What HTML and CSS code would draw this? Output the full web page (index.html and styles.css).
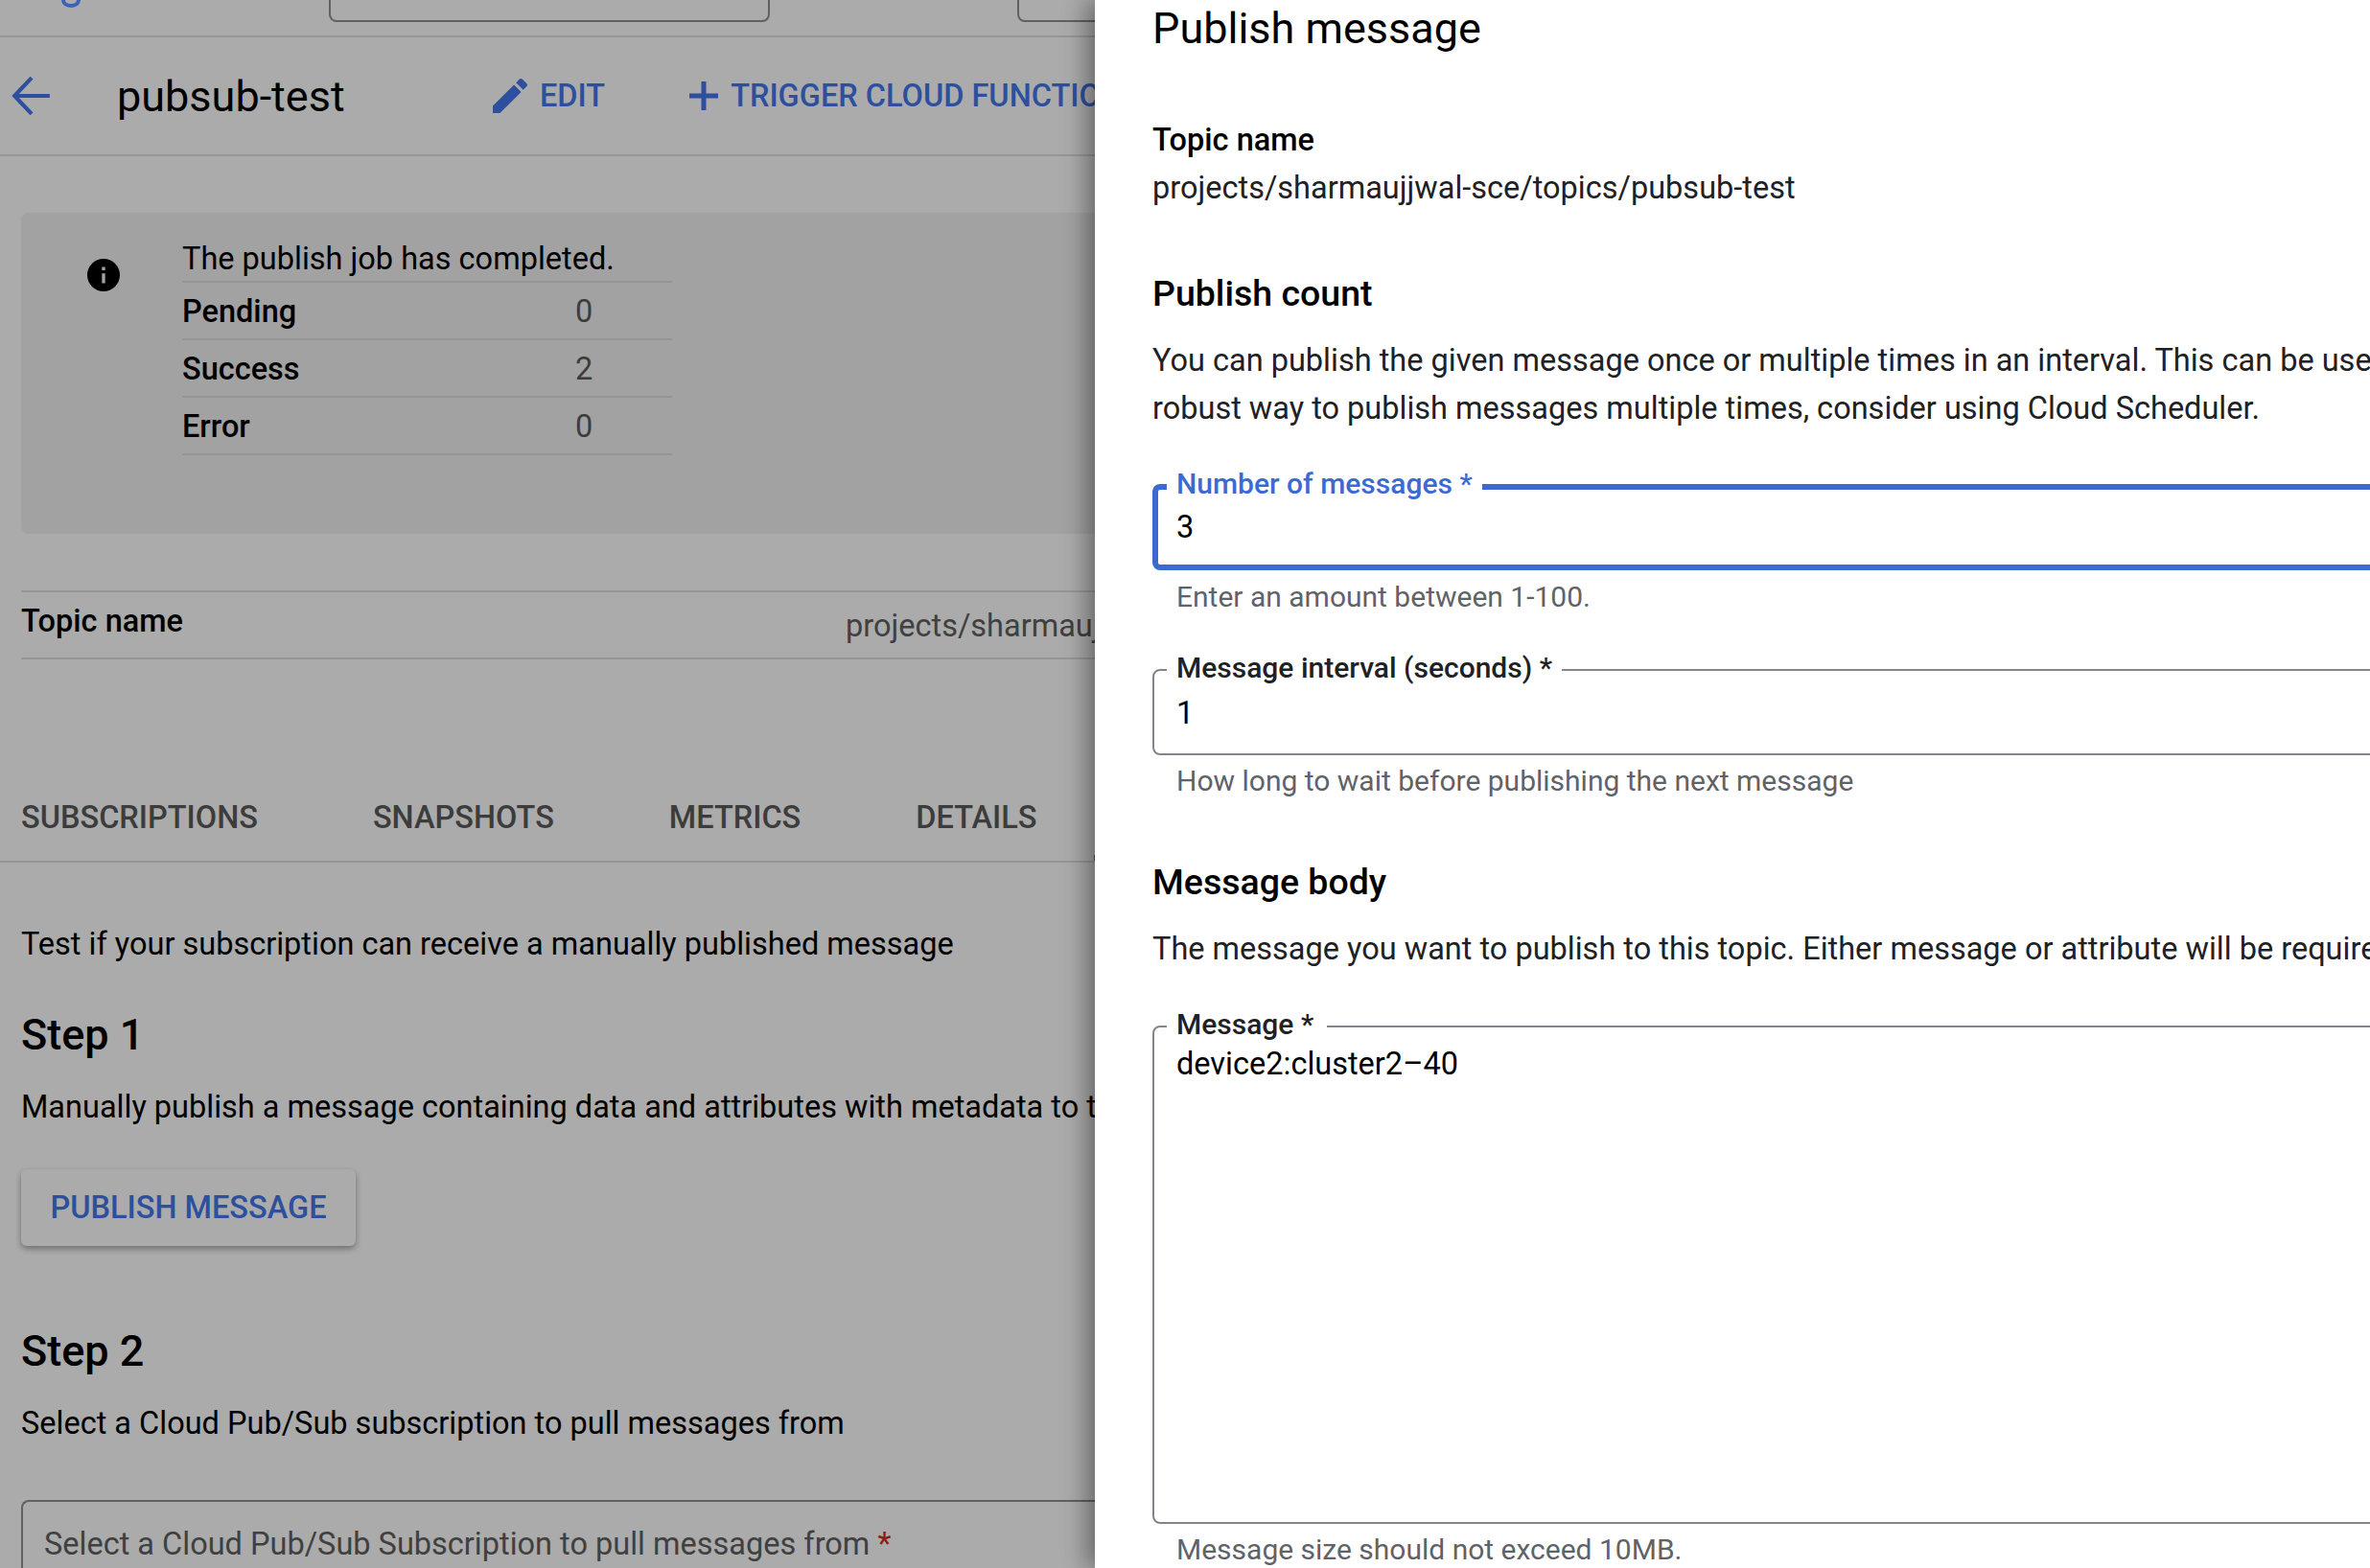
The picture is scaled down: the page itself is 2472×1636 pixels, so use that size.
FILE: index.html

```html
<!DOCTYPE html>
<html lang="en">
<head>
  <meta charset="UTF-8" />
  <meta name="viewport" content="width=device-width, initial-scale=1" />
  <title>Publish message - pubsub-test</title>
  <link rel="stylesheet" href="styles.css">
</head>
<body>
  <div class="page">
    <main class="topic">
      <div class="top-strip">
        <svg class="logo-tail" viewBox="0 0 20 8"><path d="M2 0c0 3.400 3 6 8 6s8-2.600 8-6" /></svg>
        <div class="top-box top-box-wide"></div>
        <div class="top-box"></div>
      </div>

      <div class="topic-head">
        <a class="back">
          <svg viewBox="0 0 40 40"><path d="M38 20H4M20 2 3 20l17 18" /></svg>
        </a>
        <h1>pubsub-test</h1>
        <a class="action action-edit">
          <svg viewBox="0 0 24 24"><path d="M3 17.250V21h3.750L17.810 9.940l-3.750-3.750L3 17.250zM20.710 7.040c.39-.39.39-1.020 0-1.410l-2.340-2.340c-.39-.39-1.020-.39-1.410 0l-1.830 1.830 3.750 3.750 1.830-1.830z" /></svg>
          EDIT
        </a>
        <a class="action action-trigger">
          <svg viewBox="0 0 30 30"><path d="M0 15h30M15 0v30" /></svg>
          TRIGGER CLOUD FUNCTION
        </a>
      </div>

      <div class="banner">
        <svg class="banner-icon" viewBox="0 0 20 20"><path d="M10 0a10 10 0 1 0 0 20 10 10 0 0 0 0-20zm1 15H9V9h2v6zm0-8H9V5h2v2z" /></svg>
        <div class="job">
          <div class="job-title">The publish job has completed.</div>
          <div class="job-row"><span class="job-label">Pending</span><span>0</span></div>
          <div class="job-row"><span class="job-label">Success</span><span>2</span></div>
          <div class="job-row"><span class="job-label">Error</span><span>0</span></div>
        </div>
      </div>

      <div class="meta">
        <span class="meta-label">Topic name</span>
        <span class="meta-value">projects/sharmaujjwal-sce/topics/pubsub-test</span>
      </div>

      <nav class="tabs">
        <a class="tab">SUBSCRIPTIONS</a>
        <a class="tab">SNAPSHOTS</a>
        <a class="tab">METRICS</a>
        <a class="tab">DETAILS</a>
        <a class="tab tab-active"></a>
      </nav>

      <section class="test">
        <p class="test-intro">Test if your subscription can receive a manually published message</p>
        <h2>Step 1</h2>
        <p class="step-text">Manually publish a message containing data and attributes with metadata to this topic</p>
        <button class="publish-btn" type="button">PUBLISH MESSAGE</button>
        <h2 class="step-two">Step 2</h2>
        <p class="step-text">Select a Cloud Pub/Sub subscription to pull messages from</p>
        <div class="select-box">Select a Cloud Pub/Sub Subscription to pull messages from <span class="req">*</span></div>
      </section>
    </main>

    <aside class="panel">
      <h2 class="panel-title">Publish message</h2>
      <div class="panel-label">Topic name</div>
      <div class="panel-topic">projects/sharmaujjwal-sce/topics/pubsub-test</div>

      <h3>Publish count</h3>
      <p class="panel-text">You can publish the given message once or multiple times in an interval. This can be useful<br>robust way to publish messages multiple times, consider using Cloud Scheduler.</p>

      <div class="field field-focus">
        <label class="field-label">Number of messages *</label>
        <div class="field-value">3</div>
      </div>
      <div class="hint hint-first">Enter an amount between 1-100.</div>

      <div class="field field-interval">
        <label class="field-label">Message interval (seconds) *</label>
        <div class="field-value">1</div>
      </div>
      <div class="hint">How long to wait before publishing the next message</div>

      <h3 class="body-head">Message body</h3>
      <p class="panel-text">The message you want to publish to this topic. Either message or attribute will be required</p>

      <div class="field field-message">
        <label class="field-label">Message *</label>
        <div class="field-value">device2:cluster2–40</div>
      </div>
      <div class="hint">Message size should not exceed 10MB.</div>
    </aside>
  </div>
</body>
</html>
```

FILE: styles.css

```css
* {
  box-sizing: border-box;
}
body {
  margin: 0;
  font-family: Roboto, "Liberation Sans", sans-serif;
  font-size: 32.5px;
  color: #000;
  background: #ababab;
}
h1, h2, h3, p {
  margin: 0;
  font-weight: 500;
}
p {
  font-weight: 400;
}
.page {
  display: grid;
  grid-template-columns: 1142px 1fr;
  height: 1636px;
  overflow: hidden;
}

/* left side, behind the scrim */
.topic {
  background: #ababab;
  overflow: hidden;
  white-space: nowrap;
}
.top-strip {
  display: flex;
  height: 39px;
  border-bottom: 2px solid #969696;
  align-items: flex-start;
}
.logo-tail {
  flex: none;
  width: 20px;
  height: 8px;
  margin-left: 64px;
  margin-right: 259px;
  fill: none;
  stroke: #3a63b5;
  stroke-width: 4;
}
.top-box {
  flex: none;
  width: 200px;
  height: 23px;
  border: 2px solid #5f6164;
  border-top: none;
  border-radius: 0 0 8px 8px;
}
.top-box-wide {
  width: 460px;
  margin-right: 258px;
}
.topic-head {
  display: flex;
  align-items: center;
  height: 124px;
  border-bottom: 2px solid #969696;
  padding-left: 12px;
}
.back svg {
  display: block;
  width: 42px;
  height: 42px;
  fill: none;
  stroke: #2d4f9e;
  stroke-width: 4;
}
.topic-head h1 {
  flex: none;
  width: 248px;
  margin-left: 68px;
  font-size: 45px;
  font-weight: 400;
}
.action {
  display: flex;
  flex: none;
  align-items: center;
  color: #2d4f9e;
  font-size: 32.5px;
  font-weight: 500;
}
.action-edit {
  margin-left: 138px;
  gap: 7px;
}
.action-edit svg {
  width: 48px;
  height: 48px;
  fill: #2d4f9e;
}
.action-trigger {
  margin-left: 88px;
  gap: 13px;
}
.action-trigger svg {
  width: 30px;
  height: 30px;
  fill: none;
  stroke: #2d4f9e;
  stroke-width: 5;
}
.banner {
  display: flex;
  align-items: flex-start;
  height: 335px;
  margin: 59px 0 0 22px;
  padding: 24px 0 0 69px;
  background: #a2a2a2;
  border-radius: 8px 0 0 8px;
}
.banner-icon {
  flex: none;
  width: 34px;
  height: 34px;
  margin: 24px 65px 0 0;
}
.job {
  width: 511px;
}
.job-title {
  height: 49px;
  line-height: 48px;
  border-bottom: 2px solid #959595;
}
.job-row {
  display: flex;
  height: 60px;
  line-height: 60px;
  border-bottom: 2px solid #959595;
  color: #3c3c3c;
}
.job-label {
  width: 410px;
  color: #000;
  font-weight: 500;
}
.meta {
  display: flex;
  height: 72px;
  margin: 59px 0 0 22px;
  border-top: 2px solid #969696;
  border-bottom: 2px solid #969696;
}
.meta-label {
  flex: none;
  width: 860px;
  line-height: 60px;
  font-weight: 500;
}
.meta-value {
  min-width: 0;
  overflow: hidden;
  line-height: 70px;
  color: #404040;
}
.tabs {
  display: flex;
  height: 82px;
  margin-top: 130px;
  margin-left: -38px;
  border-bottom: 2px solid #969696;
}
.tab {
  height: 80px;
  padding: 0 60px;
  line-height: 70px;
  color: #3c3c3c;
  font-weight: 500;
}
.tab-active {
  width: 200px;
  border-bottom: 6px solid #2d4f9e;
}
.test {
  padding-left: 22px;
}
.test-intro {
  margin-top: 61px;
  line-height: 48px;
}
.test h2 {
  margin-top: 43px;
  font-size: 45px;
  line-height: 56px;
}
.test .step-two {
  margin-top: 82px;
}
.step-text {
  margin-top: 23px;
  line-height: 48px;
}
.publish-btn {
  display: block;
  width: 349px;
  height: 80px;
  margin-top: 41px;
  border: none;
  border-radius: 6px;
  background: #ababab;
  color: #2d4f9e;
  font: 500 32.5px Roboto, sans-serif;
  box-shadow: 0 3px 6px rgba(0,0,0,0.35);
}
.select-box {
  height: 120px;
  margin-top: 56px;
  padding: 20px 0 0 22px;
  border: 2px solid #5f6164;
  border-right: none;
  border-radius: 8px 0 0 8px;
  line-height: 48px;
  color: #404040;
}
.req {
  color: #8a1c12;
}

/* right side, the open panel */
.panel {
  position: relative;
  background: #fff;
  padding-left: 60px;
  overflow: hidden;
  white-space: nowrap;
  box-shadow: -8px 0 24px rgba(0,0,0,0.4);
}
.panel-title {
  font-size: 45px;
  font-weight: 400;
  line-height: 60px;
}
.panel-label {
  margin-top: 62px;
  line-height: 48px;
  font-weight: 500;
}
.panel-topic {
  margin-top: 2px;
  line-height: 48px;
  color: #202124;
}
.panel h3 {
  margin-top: 61px;
  font-size: 37.5px;
  line-height: 50px;
}
.panel .body-head {
  margin-top: 60px;
}
.panel-text {
  margin-top: 20px;
  line-height: 50px;
  color: #202124;
}
.field {
  position: relative;
  width: 1500px;
  height: 90px;
  margin-top: 55px;
  border: 2px solid #80868b;
  border-radius: 8px;
}
.field-focus {
  margin-top: 54px;
  border: 6px solid #3c6ad2;
}
.field-message {
  height: 520px;
  margin-top: 55px;
}
.field-label {
  position: absolute;
  top: -23px;
  left: 13px;
  padding: 0 10px;
  background: #fff;
  font-size: 30px;
  font-weight: 500;
  line-height: 40px;
  color: #202124;
}
.field-focus .field-label {
  top: -26px;
  left: 9px;
  color: #3c6ad2;
}
.field-message .field-label {
  padding-right: 14px;
}
.field-value {
  padding: 20px 0 0 23px;
  line-height: 48px;
}
.field-focus .field-value {
  padding: 15px 0 0 19px;
}
.field-message .field-value {
  padding-top: 14px;
}
.hint {
  margin-top: 7px;
  padding-left: 25px;
  font-size: 30px;
  line-height: 40px;
  color: #5f6368;
}
.hint-first {
  margin-top: 8px;
}
```
